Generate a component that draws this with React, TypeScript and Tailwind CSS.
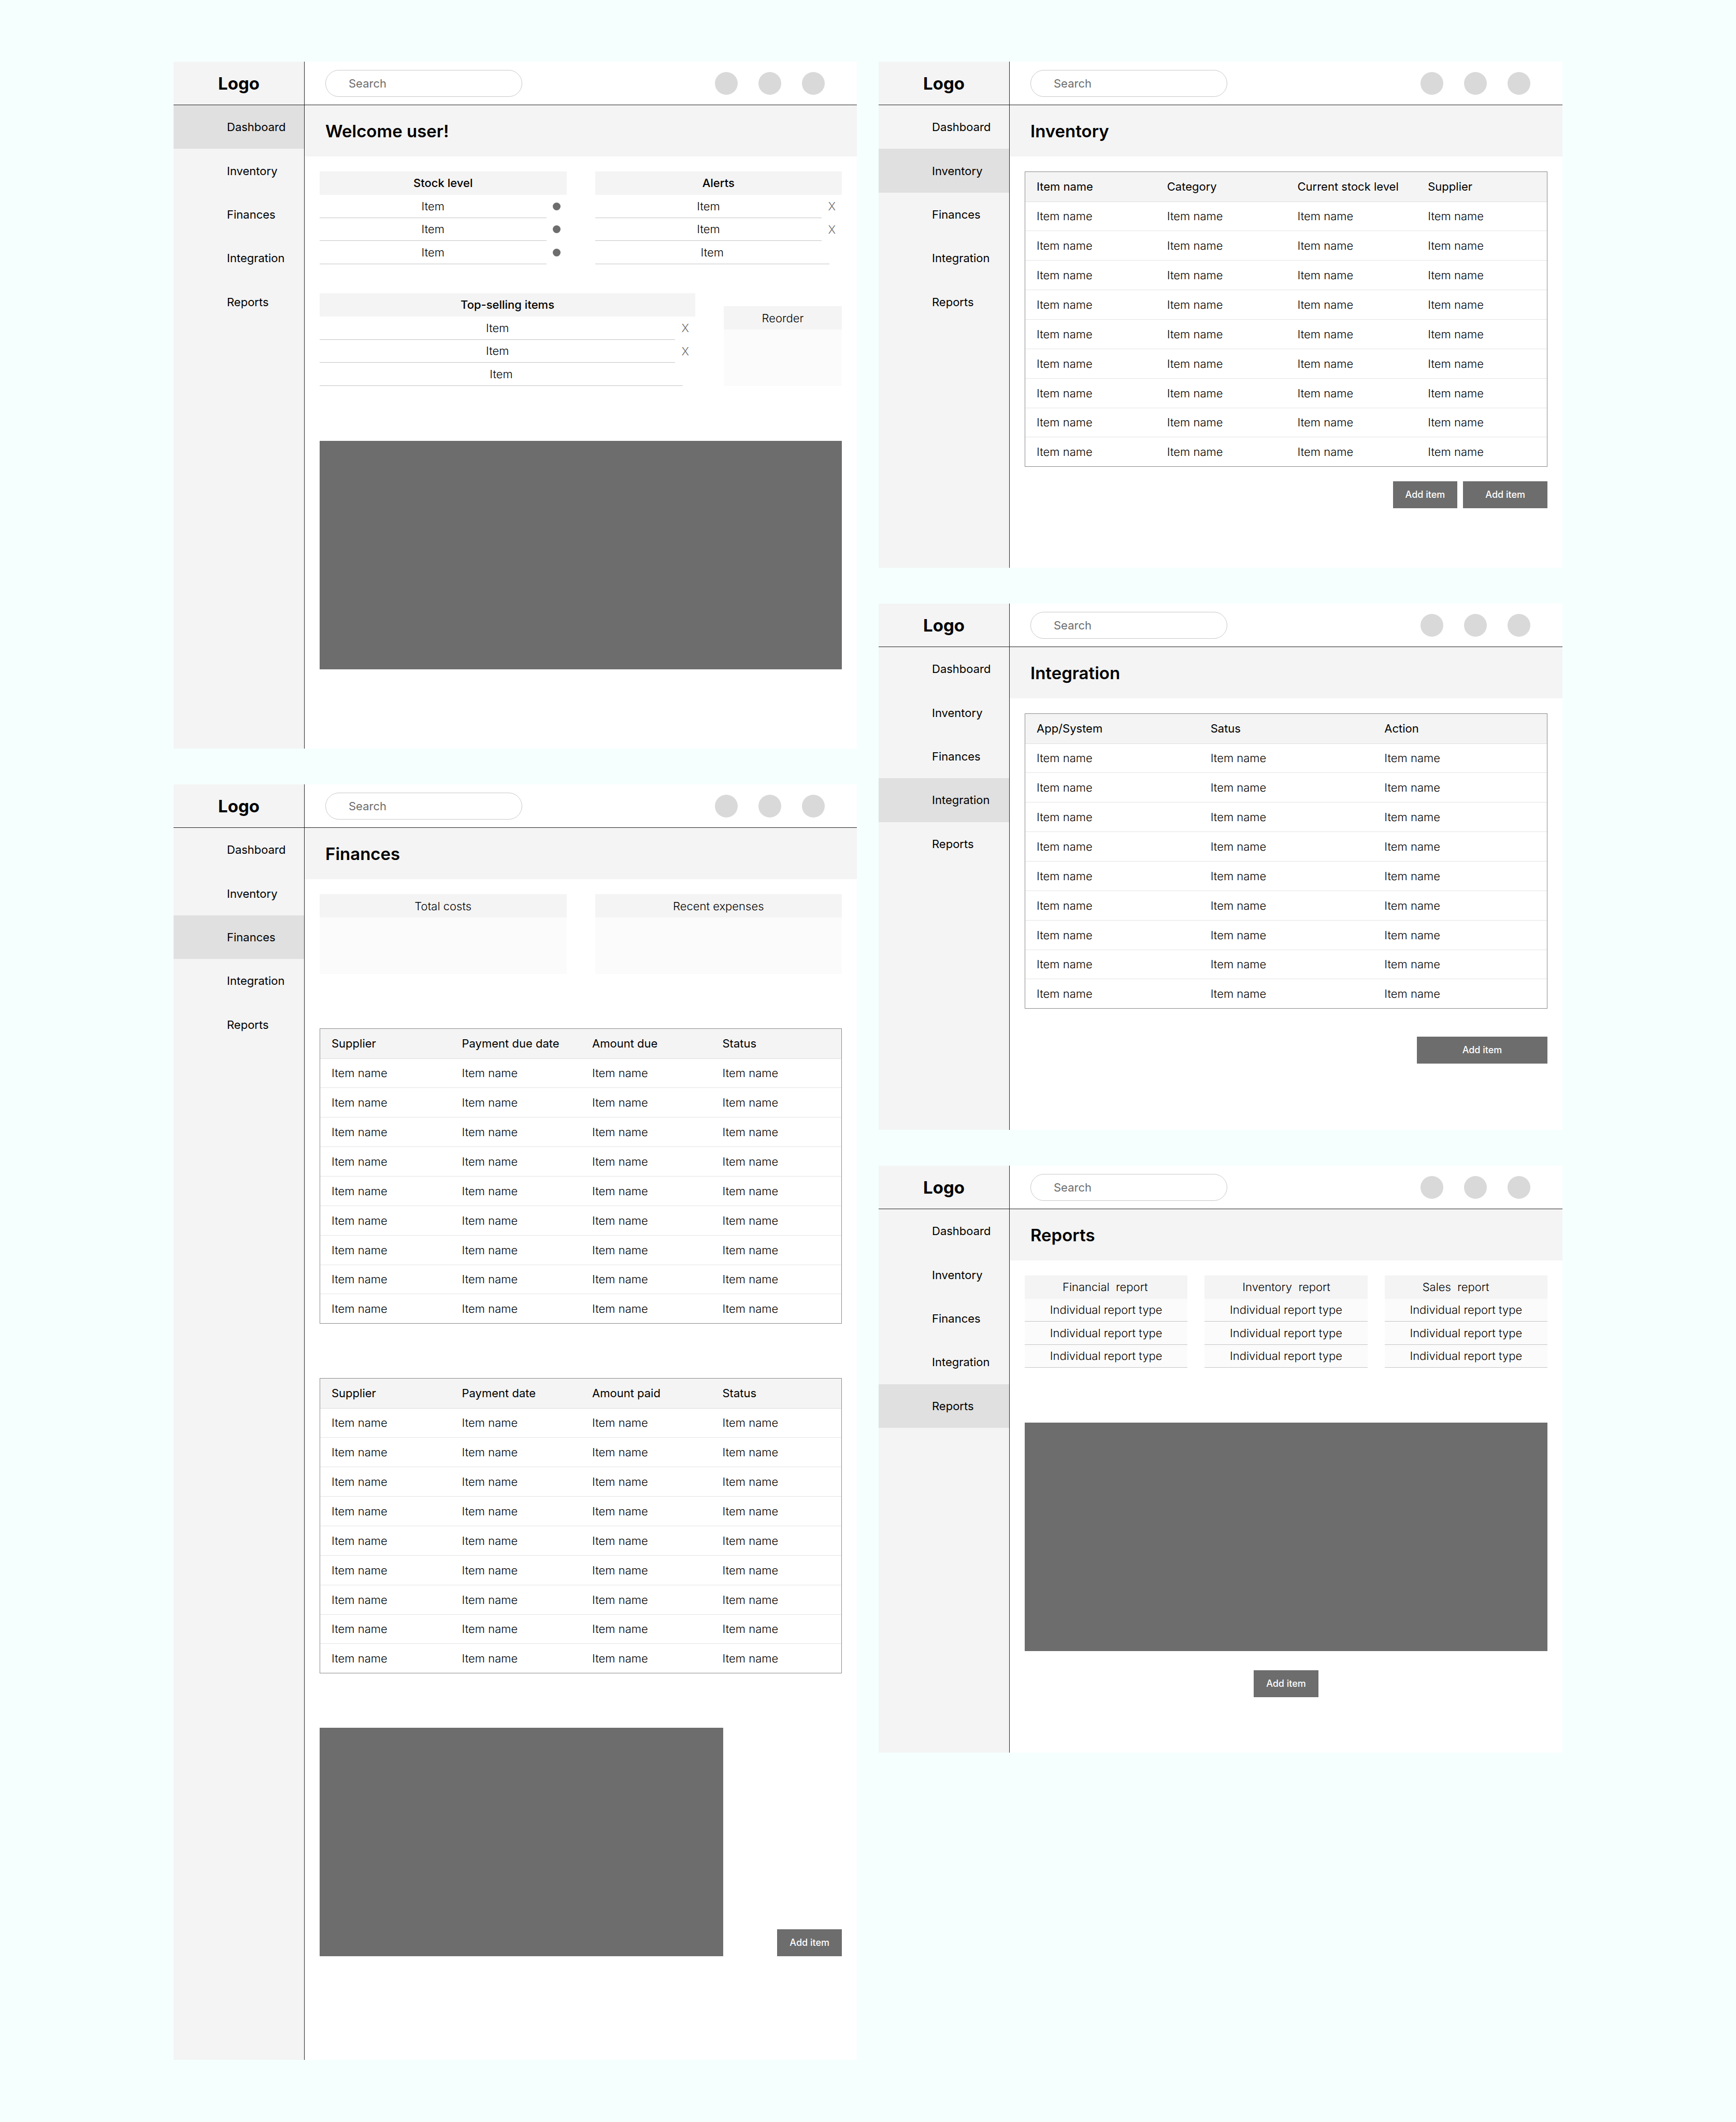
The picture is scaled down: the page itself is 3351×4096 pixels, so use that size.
import React from "react";

const NAV = ["Dashboard", "Inventory", "Finances", "Integration", "Reports"];

function Screen({ active, title, height, children }: { active: string; title: string; height: string; children: React.ReactNode }) {
  return (
    <section className={"flex bg-white " + height}>
      <aside className="w-[253px] shrink-0 border-r border-[#222222] bg-[#f4f4f4]">
        <div className="flex h-[84px] items-center justify-center border-b border-[#222222] text-[33px] leading-[40px] font-bold">Logo</div>
        <nav className="grid h-[422px] grid-rows-5">
          {NAV.map((n) => (
            <a
              key={n}
              href="#"
              className={"flex items-center pl-[103px] text-[22px] " + (n === active ? "bg-[#e0e0e0]" : "")}
            >
              {n}
            </a>
          ))}
        </nav>
      </aside>
      <div className="min-w-0 flex-1">
        <header className="flex h-[84px] items-center justify-between border-b border-[#222222] pr-[62px] pl-[40px]">
          <input
            type="text"
            aria-label="Search"
            placeholder="Search"
            className="h-[52px] w-[380px] rounded-full border border-[#c8c8c8] px-[44px] text-[22px] font-normal text-black placeholder:text-[#6d6d6d] placeholder:opacity-100"
          />
          <div className="flex gap-[40px]">
            <button aria-label="Notifications" className="size-[44px] rounded-full bg-[#d9d9d9]" />
            <button aria-label="Settings" className="size-[44px] rounded-full bg-[#d9d9d9]" />
            <button aria-label="Profile" className="size-[44px] rounded-full bg-[#d9d9d9]" />
          </div>
        </header>
        <h1 className="flex h-[99px] items-center bg-[#f4f4f4] pl-[40px] text-[33px] leading-[40px] font-semibold">{title}</h1>
        <main className="px-[29px] pt-[29px]">{children}</main>
      </div>
    </section>
  );
}

function List({ title, marks }: { title: string; marks: string[] }) {
  return (
    <div className="grid h-[179px] grid-rows-4">
      <h2 className="flex items-center justify-center bg-[#f4f4f4] font-medium">{title}</h2>
      {marks.map((m, i) => (
        <div key={i} className="flex items-center gap-[12px] pr-[12px] font-light">
          <div className="flex h-full flex-1 items-center justify-center border-b border-[#c4c4c4]">Item</div>
          {m === "dot" && <span className="size-[15px] rounded-full bg-[#6d6d6d]" />}
          {m === "x" && <button aria-label="Dismiss" className="text-[#6d6d6d]">X</button>}
          {m === "" && <span />}
        </div>
      ))}
    </div>
  );
}

function Card({ title }: { title: string }) {
  return (
    <div className="bg-[#fbfbfb]">
      <h2 className="flex h-[45px] items-center justify-center bg-[#f4f4f4] font-light">{title}</h2>
      <div className="h-[109px]" />
    </div>
  );
}

function Table({ columns }: { columns: string[] }) {
  return (
    <div className="border border-[#8a8a8a]">
      <table className="h-[568px] w-full table-fixed border-collapse text-left">
        <thead>
          <tr className="h-[57px] border-b border-[#dedede] bg-[#f4f4f4]">
            {columns.map((c) => (
              <th key={c} scope="col" className="pl-[22px] font-normal whitespace-nowrap">{c}</th>
            ))}
          </tr>
        </thead>
        <tbody>
          {Array.from({ length: 9 }, (_, r) => (
            <tr key={r} className="border-b border-[#e4e4e4] last:border-b-0">
              {columns.map((c) => (
                <td key={c} className="pl-[22px] font-light">Item name</td>
              ))}
            </tr>
          ))}
        </tbody>
      </table>
    </div>
  );
}

function AddButton({ width = "px-[24px]" }: { width?: string }) {
  return <button className={"h-[52px] bg-[#6d6d6d] text-[18px] font-medium whitespace-nowrap text-white " + width}>Add item</button>;
}

function ReportList({ title }: { title: string }) {
  return (
    <div className="grid h-[178px] grid-rows-4 bg-[#fbfbfb] font-light">
      <h2 className="flex items-center bg-[#f4f4f4] pl-[73px] whitespace-pre">{title}</h2>
      {[0, 1, 2].map((i) => (
        <a key={i} href="#" className="flex items-center justify-center border-b border-[#c4c4c4]">Individual report type</a>
      ))}
    </div>
  );
}

export default function App() {
  return (
    <div className="grid min-h-screen grid-cols-[1319fr_1320fr] items-start gap-[42px] bg-[#f5fffe] px-[335px] pt-[119px] pb-[119px] font-['Inter',sans-serif] text-[22px] leading-[32px] text-black">
      <div className="flex flex-col gap-[69px]">
        <Screen active="Dashboard" title="Welcome user!" height="min-h-[1326px]">
          <div className="grid grid-cols-2 gap-[55px]">
            <List title="Stock level" marks={["dot", "dot", "dot"]} />
            <List title="Alerts" marks={["x", "x", ""]} />
          </div>
          <div className="mt-[56px] grid grid-cols-[725fr_228fr] items-end gap-[55px]">
            <List title="Top-selling items" marks={["x", "x", ""]} />
            <Card title="Reorder" />
          </div>
          <div className="mt-[106px] h-[441px] bg-[#6d6d6d]" />
        </Screen>
        <Screen active="Finances" title="Finances" height="min-h-[2462px]">
          <div className="grid grid-cols-2 gap-[55px]">
            <Card title="Total costs" />
            <Card title="Recent expenses" />
          </div>
          <div className="mt-[105px]">
            <Table columns={["Supplier", "Payment due date", "Amount due", "Status"]} />
          </div>
          <div className="mt-[105px]">
            <Table columns={["Supplier", "Payment date", "Amount paid", "Status"]} />
          </div>
          <div className="mt-[105px] grid grid-cols-[779fr_229fr] items-end justify-items-end">
            <div className="h-[441px] w-full bg-[#6d6d6d]" />
            <AddButton />
          </div>
        </Screen>
      </div>
      <div className="flex flex-col gap-[69px]">
        <Screen active="Inventory" title="Inventory" height="min-h-[977px]">
          <Table columns={["Item name", "Category", "Current stock level", "Supplier"]} />
          <div className="mt-[28px] flex justify-end gap-[11px]">
            <AddButton />
            <AddButton width="px-[43px]" />
          </div>
        </Screen>
        <Screen active="Integration" title="Integration" height="min-h-[1016px]">
          <Table columns={["App/System", "Satus", "Action"]} />
          <div className="mt-[54px] flex justify-end">
            <AddButton width="w-[252px]" />
          </div>
        </Screen>
        <Screen active="Reports" title="Reports" height="min-h-[1133px]">
          <div className="grid grid-cols-3 gap-[33px]">
            <ReportList title="Financial  report" />
            <ReportList title="Inventory  report" />
            <ReportList title="Sales  report" />
          </div>
          <div className="mt-[106px] h-[441px] bg-[#6d6d6d]" />
          <div className="mt-[37px] flex justify-center">
            <AddButton />
          </div>
        </Screen>
      </div>
    </div>
  );
}
